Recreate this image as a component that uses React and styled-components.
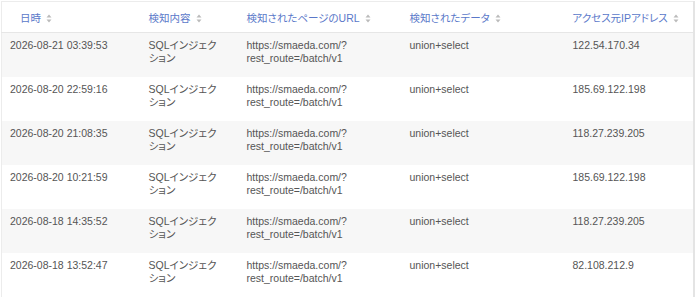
import React from "react";
import styled, { createGlobalStyle } from "styled-components";

const Global = createGlobalStyle`
  html, body { margin: 0; padding: 0; background: #fff; }
  body { font-family: "Liberation Sans", "Noto Sans CJK JP", sans-serif; }
`;

const Wrap = styled.div`
  padding: 1px 0 0 1px;
  width: 697px;
  box-sizing: border-box;
`;

const Table = styled.table`
  border-collapse: collapse;
  table-layout: fixed;
  width: 694px;
  border-top: 1px solid #ececec;
  border-left: 1px solid #ececec;
  border-right: 2px solid #e4e4e4;
  font-size: 10.5px;
  font-feature-settings: "palt";
  color: #555;
`;

const HeadRow = styled.tr`
  height: 31px;
  border-bottom: 1px solid #e6e6e6;
`;

const Th = styled.th`
  text-align: left;
  font-weight: normal;
  color: #5a78c9;
  padding: 0 8px 0 ${(p) => (p.$first ? "18px" : "8px")};
  vertical-align: middle;
  white-space: nowrap;
`;

const SortIcon = styled.svg`
  width: 6px;
  height: 9px;
  margin-left: 5px;
  vertical-align: -1px;
`;

const Row = styled.tr`
  height: 44px;
  background: ${(p) => (p.$alt ? "#f7f7f7" : "#fff")};
`;

const Td = styled.td`
  vertical-align: top;
  padding: 6px 8px 0 8px;
  line-height: 13px;
  word-break: ${(p) => (p.$break ? "break-all" : "normal")};
`;

const Sort = () => (
  <SortIcon viewBox="0 0 6 9">
    <path d="M3 0.5 L5.5 3.5 H0.5 Z" fill="#bbb" />
    <path d="M3 8.5 L5.5 5.5 H0.5 Z" fill="#bbb" />
  </SortIcon>
);

const rows = [
  ["2026-08-21 03:39:53", "122.54.170.34"],
  ["2026-08-20 22:59:16", "185.69.122.198"],
  ["2026-08-20 21:08:35", "118.27.239.205"],
  ["2026-08-20 10:21:59", "185.69.122.198"],
  ["2026-08-18 14:35:52", "118.27.239.205"],
  ["2026-08-18 13:52:47", "82.108.212.9"],
];

export default function App() {
  return (
    <>
      <Global />
      <Wrap>
        <Table>
          <colgroup>
            <col style={{ width: 139 }} />
            <col style={{ width: 98 }} />
            <col style={{ width: 163 }} />
            <col style={{ width: 163 }} />
            <col />
          </colgroup>
          <thead>
            <HeadRow>
              <Th $first>日時<Sort /></Th>
              <Th>検知内容<Sort /></Th>
              <Th>検知されたページのURL<Sort /></Th>
              <Th>検知されたデータ<Sort /></Th>
              <Th>アクセス元IPアドレス<Sort /></Th>
            </HeadRow>
          </thead>
          <tbody>
            {rows.map(([d, ip], i) => (
              <Row key={i} $alt={i % 2 === 0}>
                <Td>{d}</Td>
                <Td>SQLインジェク<br />ション</Td>
                <Td>https://smaeda.com/?<br />rest_route=/batch/v1</Td>
                <Td>union+select</Td>
                <Td>{ip}</Td>
              </Row>
            ))}
          </tbody>
        </Table>
      </Wrap>
    </>
  );
}
